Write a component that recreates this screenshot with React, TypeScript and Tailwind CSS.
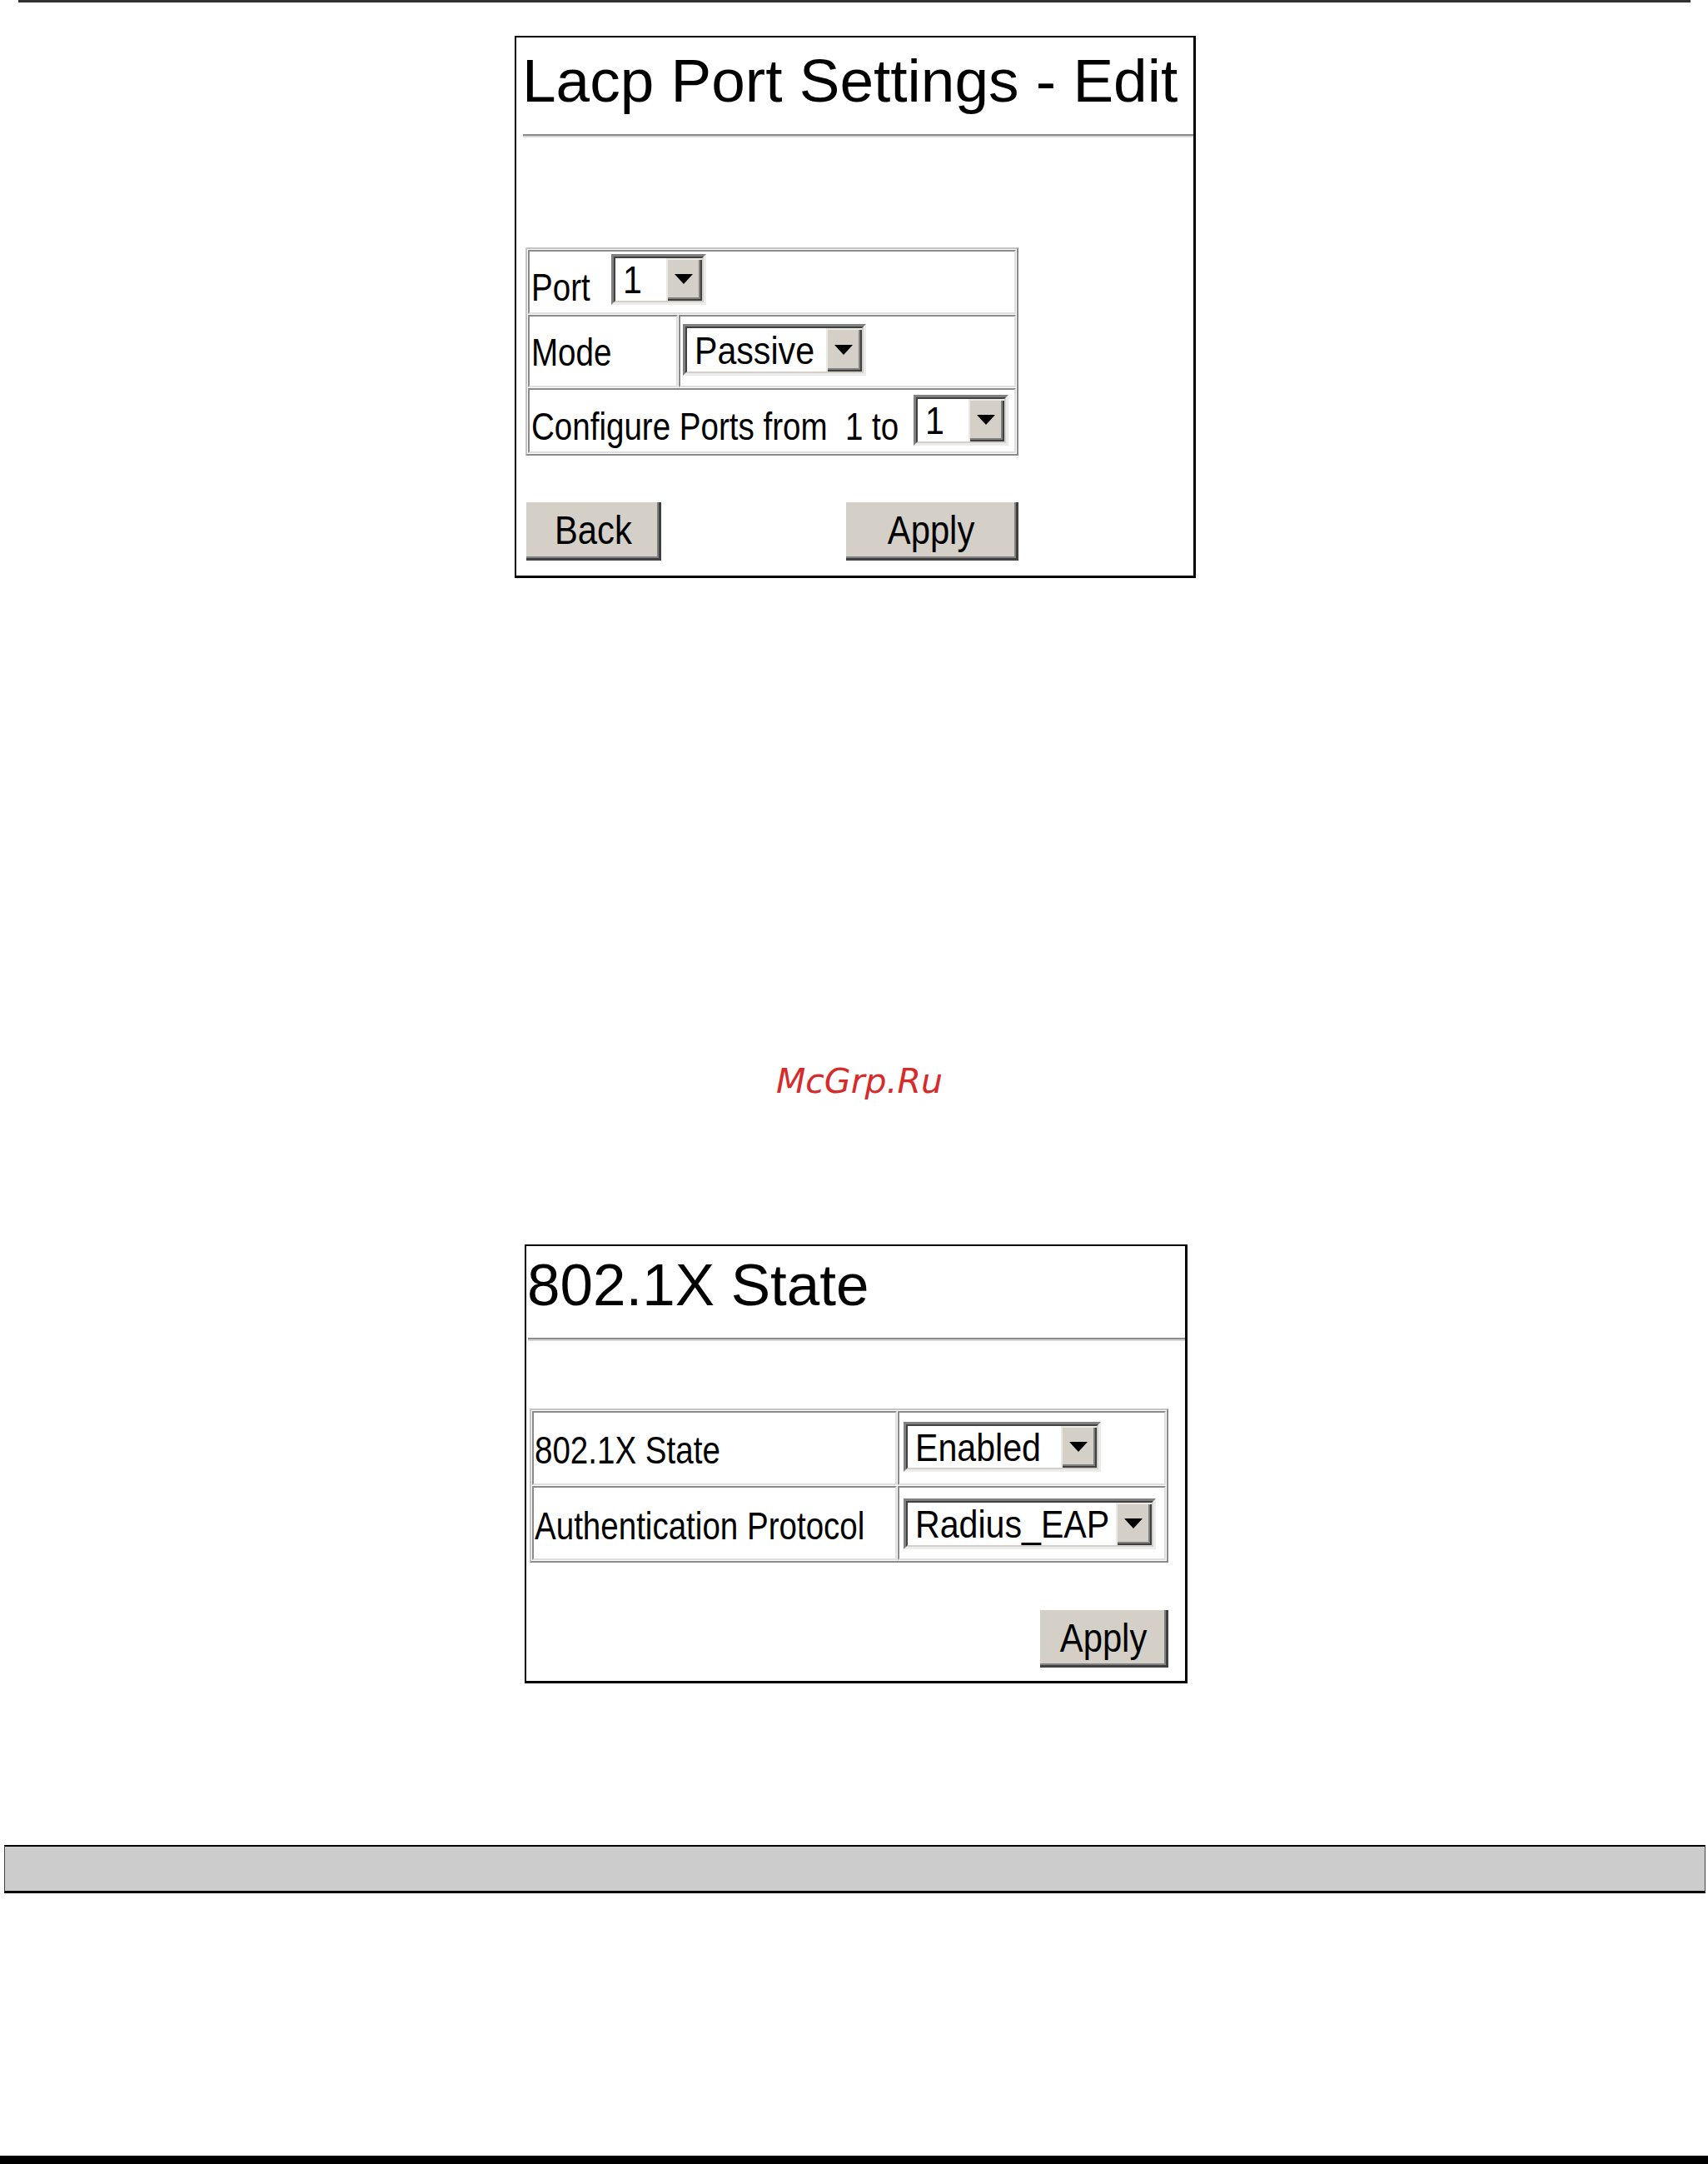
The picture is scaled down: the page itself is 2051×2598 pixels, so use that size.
import React from 'react';

const formFont = "font-['Liberation_Sans',Arial,sans-serif]";

// the form text is an old bitmap sans: tall and narrow, so squeeze it horizontally
function Narrow({ children, className = 'origin-left scale-x-[0.82]' }: { children: React.ReactNode; className?: string }) {
  return <span className={`inline-block whitespace-pre ${className}`}>{children}</span>;
}

function Arrow() {
  return (
    <svg width="22" height="12" viewBox="0 0 22 12" className="-ml-[2px] -mt-[1px] shrink-0">
      <polygon points="0,0 22,0 11,12" fill="#000" />
    </svg>
  );
}

function Dropdown({ value, className }: { value: string; className: string }) {
  return (
    <div
      className={`flex shrink-0 border-[3px] border-t-[#808080] border-l-[#808080] border-b-[#ececec] border-r-[#ececec] ${className}`}
    >
      <div className="flex min-w-0 flex-1 border-2 border-t-[#404040] border-l-[#404040] border-b-[#d4d0c8] border-r-[#d4d0c8] bg-white">
        <span className="flex w-0 min-w-0 flex-1 items-center overflow-hidden pl-[9px] text-[47px] leading-none text-black">
          <Narrow className="origin-left scale-x-[0.875]">{value}</Narrow>
        </span>
        <span className="flex w-[43px] shrink-0 items-center justify-center bg-[#d4d0c8] shadow-[inset_2px_2px_0_#ebe9e4,inset_-2px_-2px_0_#404040,inset_-4px_-4px_0_#808080]">
          <Arrow />
        </span>
      </div>
    </div>
  );
}

function Button({ label, className }: { label: string; className: string }) {
  return (
    <button
      className={`flex items-center justify-center bg-[#d4d0c8] text-[48px] leading-none text-black shadow-[inset_2px_2px_0_#ffffff,inset_-3px_-3px_0_#404040,inset_-5px_-5px_0_#808080] ${className}`}
    >
      <Narrow className="origin-center scale-x-[0.87]">{label}</Narrow>
    </button>
  );
}

// one table cell with the sunken 3d edge
function Cell({ children, className }: { children: React.ReactNode; className: string }) {
  return (
    <div
      className={`flex items-start border-2 border-t-[#8a8a8a] border-l-[#8a8a8a] border-b-[#dedede] border-r-[#dedede] ${className}`}
    >
      {children}
    </div>
  );
}

function LacpEdit() {
  return (
    <div className="ml-[618px] mt-[40px] h-[651px] w-[818px] border-2 border-b-[3px] border-r-[3px] border-black bg-white">
      <h1 className="pl-[7px] pt-[15px] font-['Liberation_Sans',Arial,sans-serif] text-[73px] leading-[73px] font-normal text-black">
        Lacp Port Settings - Edit
      </h1>
      <div className="ml-[8px] mt-[28px] h-[4px] border-t-2 border-b-2 border-t-[#8c8c8c] border-b-[#d6d6d6]" />

      <div className={`ml-[11px] mt-[132px] w-[592px] border-2 border-t-[#c4c4c4] border-l-[#c4c4c4] border-b-[#8a8a8a] border-r-[#8a8a8a] p-[1px] ${formFont} text-[47px] leading-none text-black`}>
        <div className="flex flex-col gap-[1px]">
          <Cell className="h-[77px]">
            <span className="mt-[19px] w-[98px] shrink-0 pl-[2px]">
              <Narrow>Port</Narrow>
            </span>
            <Dropdown value="1" className="mt-[3px] h-[61px] w-[114px]" />
          </Cell>
          <div className="flex h-[87px] gap-[1px]">
            <Cell className="h-full w-[180px]">
              <span className="mt-[19px] pl-[2px]">
                <Narrow>Mode</Narrow>
              </span>
            </Cell>
            <Cell className="h-full flex-1 pl-[3px]">
              <Dropdown value="Passive" className="mt-[9px] h-[62px] w-[220px]" />
            </Cell>
          </div>
          <Cell className="h-[78px]">
            <span className="mt-[20px] w-[461px] shrink-0 pl-[2px]">
              <Narrow>Configure Ports from  1 to</Narrow>
            </span>
            <Dropdown value="1" className="mt-[6px] h-[61px] w-[114px]" />
          </Cell>
        </div>
      </div>

      <div className={`ml-[10px] mt-[54px] flex w-[593px] justify-between ${formFont}`}>
        <Button label="Back" className="h-[72px] w-[164px]" />
        <Button label="Apply" className="h-[72px] w-[209px]" />
      </div>
    </div>
  );
}

function DotXState() {
  return (
    <div className="ml-[630px] mt-[175px] h-[527px] w-[796px] border-2 border-b-[3px] border-r-[3px] border-black bg-white">
      <h1 className="pl-[1px] pt-[10px] font-['Liberation_Sans',Arial,sans-serif] text-[71px] leading-[73px] font-normal text-black">
        802.1X State
      </h1>
      <div className="ml-[2px] mt-[27px] h-[4px] border-t-2 border-b-2 border-t-[#8c8c8c] border-b-[#d6d6d6]" />

      <div className={`ml-[4px] mt-[81px] w-[767px] border-2 border-t-[#c4c4c4] border-l-[#c4c4c4] border-b-[#8a8a8a] border-r-[#8a8a8a] p-[1px] ${formFont} text-[47px] leading-none text-black`}>
        <div className="flex flex-col gap-[1px]">
          <div className="flex h-[89px] gap-[1px]">
            <Cell className="h-full w-[438px] shrink-0">
              <span className="mt-[21px] pl-[1px]">
                <Narrow>802.1X State</Narrow>
              </span>
            </Cell>
            <Cell className="h-full min-w-0 flex-1 pl-[5px]">
              <Dropdown value="Enabled" className="mt-[11px] h-[60px] w-[237px]" />
            </Cell>
          </div>
          <div className="flex h-[89px] gap-[1px]">
            <Cell className="h-full w-[438px] shrink-0">
              <span className="mt-[22px] pl-[1px]">
                <Narrow>Authentication Protocol</Narrow>
              </span>
            </Cell>
            <Cell className="h-full min-w-0 flex-1 pl-[5px]">
              <Dropdown value="Radius_EAP" className="mt-[13px] h-[61px] w-[303px]" />
            </Cell>
          </div>
        </div>
      </div>

      <div className={`ml-[4px] mt-[55px] flex w-[767px] justify-end ${formFont}`}>
        <Button label="Apply" className="h-[71px] w-[156px]" />
      </div>
    </div>
  );
}

export default function App() {
  return (
    <div className="flex h-[2598px] w-[2051px] flex-col overflow-hidden bg-white">
      <div className="ml-[22px] h-[3px] w-[2008px] bg-[#333333]" />

      <LacpEdit />

      <p className="mt-[584px] pl-[13px] text-center font-['DejaVu_Sans',Verdana,sans-serif] text-[41px] leading-[41px] italic text-[#d62b2b]">
        McGrp.Ru
      </p>

      <DotXState />

      <div className="ml-[5px] mt-[194px] h-[58px] w-[2043px] border-x border-t-2 border-b-[3px] border-x-[#444444] border-t-black border-b-black bg-[#cccccc]" />

      <div className="mt-[315px] h-[10px] w-full bg-black" />
    </div>
  );
}
